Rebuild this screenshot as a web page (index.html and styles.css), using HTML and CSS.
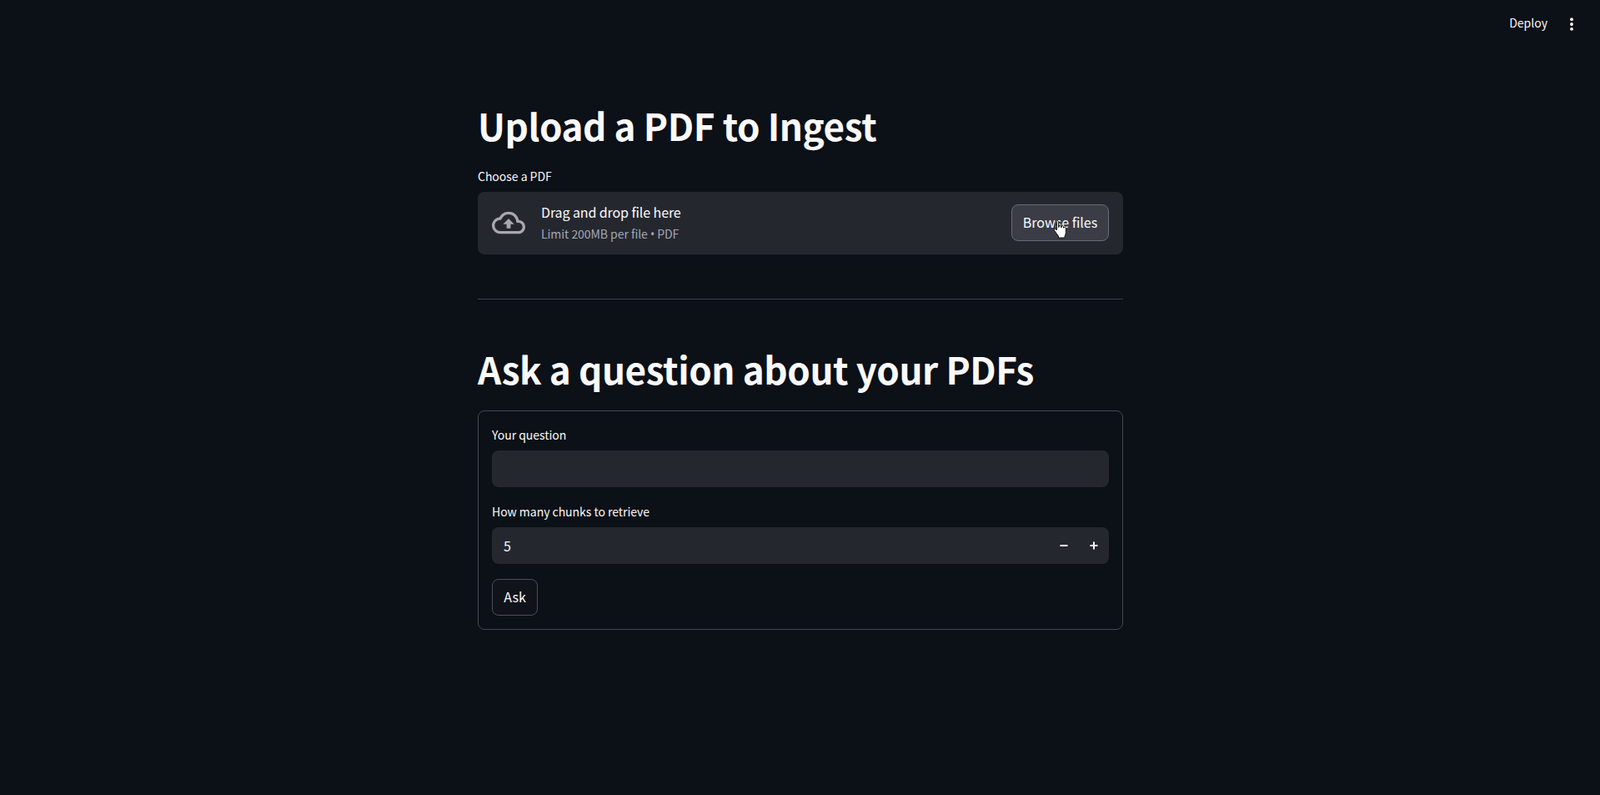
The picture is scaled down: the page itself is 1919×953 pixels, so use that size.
FILE: index.html
```html
<!DOCTYPE html>
<html lang="en">
<head>
  <meta charset="UTF-8">
  <meta name="viewport" content="width=device-width, initial-scale=1.0">
  <link rel="stylesheet" href="styles.css">
  <title>Upload a PDF to Ingest</title>
</head>
<body>
  <header class="top-bar">
    <span class="deploy">Deploy</span>
    <svg class="kebab" width="24" height="24" viewBox="0 0 24 24" fill="currentColor"><circle cx="12" cy="5" r="2.300"/><circle cx="12" cy="12" r="2.300"/><circle cx="12" cy="19" r="2.300"/></svg>
  </header>

  <main class="main">
    <h1 class="title">Upload a PDF to Ingest</h1>
    <p class="label label-upload">Choose a PDF</p>
    <div class="dropzone">
      <svg class="cloud" width="40" height="40" viewBox="0 0 24 24" fill="currentColor"><path d="M19.35 10.04C18.67 6.59 15.64 4 12 4 9.11 4 6.6 5.64 5.35 8.04 2.34 8.36 0 10.91 0 14c0 3.31 2.69 6 6 6h13c2.76 0 5-2.24 5-5 0-2.64-2.05-4.78-4.65-4.96zM19 18H6c-2.21 0-4-1.79-4-4 0-2.05 1.53-3.76 3.56-3.97l1.07-.11.5-.95C8.08 7.14 9.94 6 12 6c2.62 0 4.88 1.86 5.39 4.43l.3 1.5 1.53.11c1.56.1 2.78 1.41 2.78 2.96 0 1.65-1.35 3-3 3zM8 13h2.55v3h2.9v-3H16l-4-4z"/></svg>
      <div class="drop-text">
        <span class="drop-title">Drag and drop file here</span>
        <small class="drop-limit">Limit 200MB per file <span class="dot">•</span> PDF</small>
      </div>
      <button class="btn btn-browse">Browse files</button>
      <svg class="hand" width="18" height="24" viewBox="0 0 18 24"><path d="M5 1.500c1 0 1.600.7 1.600 1.700v6.300l.6-.1V8c0-1.600 2.400-1.600 2.400 0v1.600l.6.1V8.800c0-1.500 2.300-1.500 2.300 0v1.300l.5.100c0-1.300 2.300-1.200 2.300.3v5c0 2-.5 3-1.200 4.500v2H6.500v-1.800C5 18 3.500 16 1.700 13.500c-.9-1.300.8-2.800 2-1.500l.8.900V3.200c0-1 .5-1.700.5-1.700z" fill="#fff" stroke="#111" stroke-width="1"/></svg>
    </div>

    <hr class="divider">

    <h1 class="title">Ask a question about your PDFs</h1>
    <form class="ask-form">
      <p class="label">Your question</p>
      <div class="field"></div>
      <p class="label label-chunks">How many chunks to retrieve</p>
      <div class="field field-number">
        <span class="field-value">5</span>
        <span class="step">
          <svg width="12" height="12" viewBox="0 0 12 12" fill="currentColor"><rect x="1.500" y="5" width="9" height="2"/></svg>
        </span>
        <span class="step">
          <svg width="12" height="12" viewBox="0 0 12 12" fill="currentColor"><rect x="1.500" y="5" width="9" height="2"/><rect x="5" y="1.500" width="2" height="9"/></svg>
        </span>
      </div>
      <button type="button" class="btn btn-ask">Ask</button>
    </form>
  </main>
</body>
</html>
```

FILE: styles.css
```css
* {
    box-sizing: border-box;
}

body {
    margin: 0;
    padding-left: 1px;
    height: 953px;
    overflow: hidden;
    background-color: #0c1017;
    color: #fafafa;
    font-family: "Noto Sans CJK SC", "Noto Sans", sans-serif;
    font-size: 16px;
}

.top-bar {
    position: absolute;
    top: 0;
    right: 0;
    display: flex;
    align-items: center;
    height: 56px;
    padding-right: 24px;
}

.deploy {
    font-size: 14px;
    margin-right: 19px;
    position: relative;
    top: -1px;
}

.kebab {
    display: block;
    width: 20px;
    height: 20px;
    position: relative;
    top: 1px;
}

.main {
    width: 774px;
    margin: 0 auto;
    padding-top: 118px;
}

.title {
    margin: 0;
    font-size: 44px;
    font-weight: 700;
    line-height: 64px;
    letter-spacing: -0.4px;
}

.label {
    margin: 0 0 9px;
    font-size: 14px;
    line-height: 20px;
    letter-spacing: -0.03px;
}

.label-upload {
    margin-top: 19px;
}

.label-chunks {
    margin-top: 19px;
}

.dropzone {
    position: relative;
    display: flex;
    align-items: center;
    height: 75px;
    padding: 0 17px;
    background-color: #25272f;
    border-radius: 8px;
}

.cloud {
    color: #a6a8ae;
    flex-shrink: 0;
    margin-right: 19px;
    margin-bottom: 1px;
}

.drop-text {
    display: flex;
    flex-direction: column;
    gap: 3px;
    flex: 1;
    margin-bottom: 2px;
}

.drop-title {
    line-height: 24px;
    letter-spacing: -0.1px;
}

.drop-limit {
    font-size: 14px;
    line-height: 22px;
    color: #a3a8b4;
    letter-spacing: -0.05px;
}

.dot {
    font-family: "Noto Sans", sans-serif;
}

.btn {
    font: inherit;
    color: #fafafa;
    border: 1px solid #4b4e58;
    border-radius: 8px;
    height: 44px;
    cursor: pointer;
}

.btn-browse {
    width: 117px;
    padding: 0 0 1px;
    margin-bottom: 2px;
    background-color: #3a3c46;
    border-color: #686b75;
}

.btn-ask {
    display: block;
    width: 55px;
    margin-top: 18px;
    padding: 0 0 2px;
    background-color: #10131a;
}

.hand {
    position: absolute;
    left: 690px;
    top: 33px;
}

.divider {
    height: 1px;
    margin: 53px 0 51px;
    border: none;
    background-color: #3d4049;
}

.ask-form {
    height: 263px;
    margin-top: 18px;
    padding: 18px 16px 0;
    border: 1px solid #44474f;
    border-radius: 8px;
}

.field {
    height: 44px;
    background-color: #25272f;
    border-radius: 8px;
}

.field-number {
    display: flex;
    align-items: center;
    padding-left: 14px;
}

.field-value {
    flex: 1;
    padding-bottom: 1px;
}

.step {
    display: flex;
    align-items: center;
    justify-content: center;
    width: 36px;
}
```
